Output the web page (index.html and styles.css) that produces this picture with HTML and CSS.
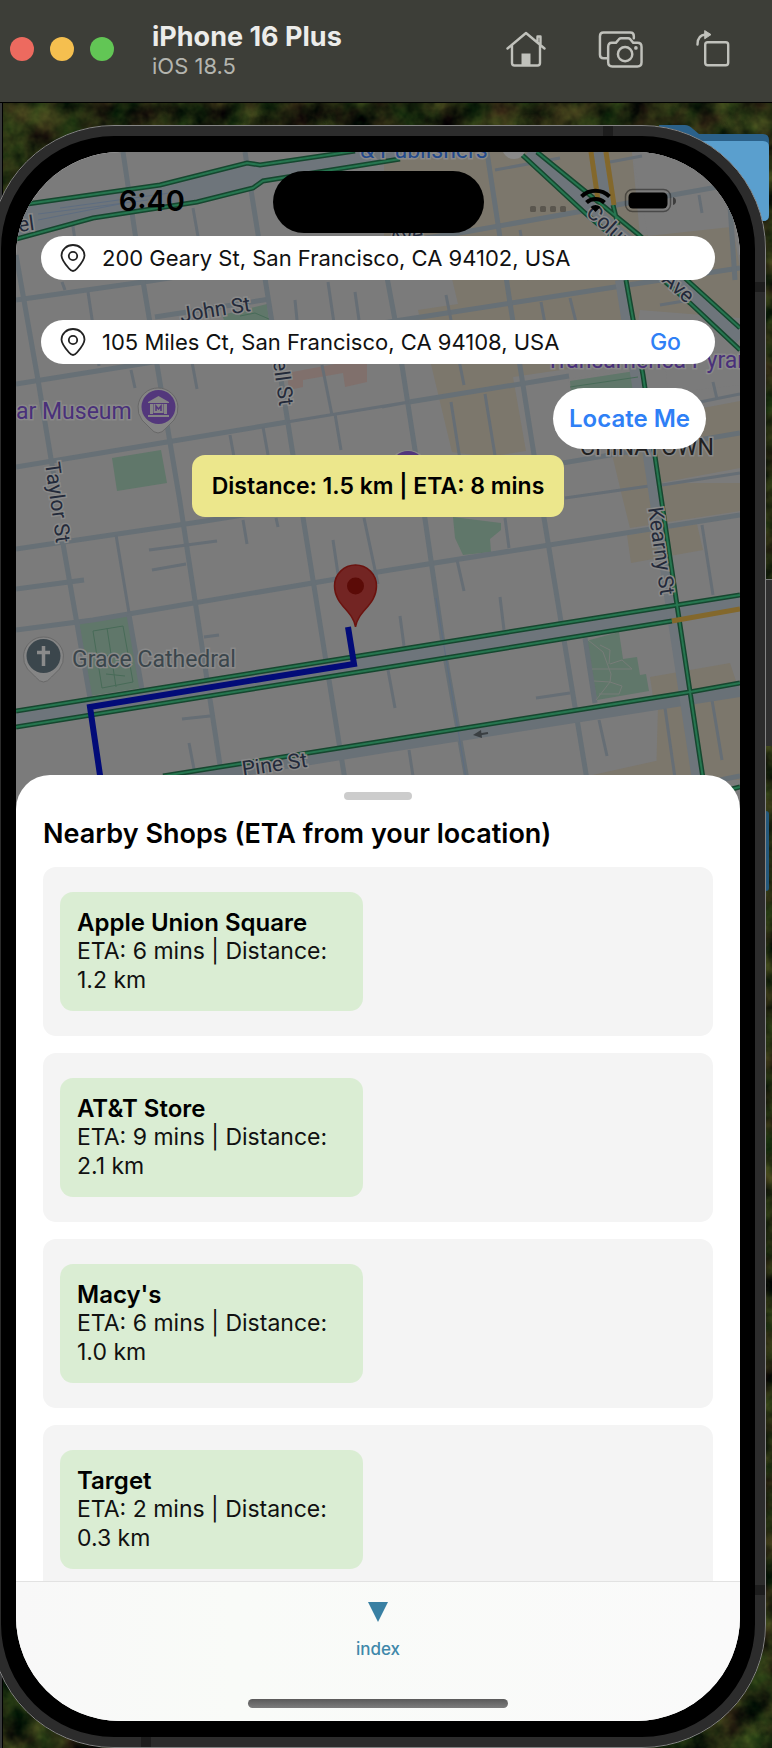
FILE: index.html
```html
<!DOCTYPE html>
<html lang="en">
<head>
<meta charset="utf-8">
<meta name="viewport" content="width=device-width, initial-scale=1">
<title>iPhone 16 Plus</title>
<link rel="stylesheet" href="styles.css">
</head>
<body>
<header class="titlebar">
  <div class="lights">
    <button class="light light-close" aria-label="Close"></button>
    <button class="light light-minimise" aria-label="Minimise"></button>
    <button class="light light-zoom" aria-label="Zoom"></button>
  </div>
  <div class="device">
    <h1 class="device-name">iPhone 16 Plus</h1>
    <p class="device-os">iOS 18.5</p>
  </div>
  <div class="tools">
    <button class="tool" aria-label="Home">
      <svg width="40" height="38" viewBox="0 0 40 38" fill="none" stroke="currentColor" stroke-width="2.4" stroke-linecap="round" stroke-linejoin="round">
        <path d="M1.500 18.500 20 3l18.500 15.500M6 15.500V33q0 2.500 2.500 2.500h23Q34 35.500 34 33V15.500M31.500 12V6.500h3v8.500"/>
        <path d="M15.500 23.500h9V35h-9z" fill="currentColor" stroke="none"/>
      </svg>
    </button>
    <button class="tool" aria-label="Screenshot">
      <svg width="46" height="38" viewBox="0 0 44 37" fill="none" stroke="currentColor" stroke-width="2.400" stroke-linecap="round" stroke-linejoin="round">
        <path d="M8 27.500H5Q1.500 27.500 1.500 24V6q0-3.500 3.500-3.500h26Q34.500 2.500 34.500 6v2"/>
        <path d="M13 12.500h4l3-3.500q1-1 2-1h7q1 0 2 1l3 3.500h4q4 0 4 4V31.500q0 4-4 4H13.500q-4 0-4-4V16.500q0-4 3.500-4z"/>
        <circle cx="26" cy="23.500" r="7"/><circle cx="36.500" cy="17.500" r="1.800" fill="currentColor" stroke="none"/>
      </svg>
    </button>
    <button class="tool" aria-label="Rotate">
      <svg width="34" height="38" viewBox="0 0 34 38" fill="none" stroke="currentColor" stroke-width="2.400" stroke-linecap="round" stroke-linejoin="round">
        <rect x="9.200" y="12.200" width="23" height="23" rx="2.500"/>
        <path d="M1.500 14.500Q1.500 5 9.500 4.500"/><path d="M9 .8 15 4.600 9 8.600z" fill="currentColor" stroke-width="1"/>
      </svg>
    </button>
  </div>
</header>

<main class="desktop">
  <svg class="wallpaper" aria-hidden="true">
    <filter id="foliage" x="0" y="0" width="100%" height="100%" color-interpolation-filters="sRGB">
      <feTurbulence type="fractalNoise" baseFrequency="0.035" numOctaves="4" seed="8"/>
      <feColorMatrix values="0.420 0.200 0 0 -0.170  0.300 0.360 0 0 -0.160  0.150 0.100 0 0 -0.060  0 0 0 0 1"/>
    </filter>
    <rect width="100%" height="100%" filter="url(#foliage)"/>
  </svg>
  <span class="window-edge"></span>
  <svg class="folder" width="112" height="100" viewBox="0 0 112 100" aria-hidden="true">
    <path d="M0 0h26q4 0 8 4l6 5h64q6 0 6 6v75q0 6-6 6H20z" fill="#2b618a"/>
    <path d="M20 16h84q6 0 6 6v68q0 6-6 6H20z" fill="#5a9fce"/>
  </svg>
  <span class="folder-edge"></span>
  <span class="side-button"></span>

  <div class="phone">
    <span class="seam seam-top"></span>
    <span class="seam seam-bottom"></span>
    <span class="seam seam-upper"></span>
    <span class="seam seam-lower"></span>
    <div class="screen">
      <svg class="map" viewBox="16 152 724 660" preserveAspectRatio="xMidYMin slice" role="img" aria-label="Map of San Francisco with route">
        <rect x="16" y="152" width="724" height="660" fill="#7b7b7b"/>
        <g fill="#7c776c">
          <path d="M384 152H632l8 84 92-13 8 45v50l-100-8-8 50-85 12-34 5 13 74-38 6-36-5-34-142 40-6-10-42H384z"/>
          <path d="M703 408l37-7v67l-80 15h80v28l-110 17-8-32-12-50 90-14zM627 535l70-11 6 26-72 13zM650 677l80-14 7 21-84 13zM658 706l82-14v88h-84zM570 780l90-20 5 15z"/>
        </g>
        <path fill="#7b7b7b" d="M632 152h108v74l-92 10zM568 379l60-10 8 34-56 10zM662 330l78-10v65l-72 8z"/>
        <g fill="#60776a">
          <path d="M112 458l49-8 6 33-50 8z"/><path d="M222 315l45-11 2 16h-45zM570 381l65-10 2 18-66 4z"/>
          <path d="M79 622l49-7 12 73-50 8zM453 517l48 6v7l-11 9 1 13-28 3-8-17z"/><path d="M586 641l33-9 4 27 14-2 3 18 6-1 3 17-52 9z"/>
        </g>
        <path fill="#80706c" d="M287 373l80-15v24l-22 5-2-14-40 7v7l-14 3z"/>
        <g fill="none" stroke="#677076" stroke-width="5">
          <path d="M16 300 150 281 465 232 740 183M16 384 147 363 395 321 615 287 740 268M155 317l115-18M16 467l151-25 120-20M409 402l160-26M16 549l183-27 240-38 301-51M16 630l77-10 297-50 350-55M16 589l68-9"/>
          <path d="M16 255l22 125 16 97M62 538l28 160M123 152l12 81 14 84 31 185 40 263M245 152l48 303 52 325M487 152l23 151 34 215 43 262M380 240l15 80 20 130 29 200 23 130M720 780l20-4"/>
          <path d="M129 615l14 80M585 638l10 65"/><path d="M727 160l8 120"/>
        </g>
        <g fill="none" stroke="#666e75" stroke-width="3">
          <path d="M287 422l122-20M565 498l84-12M662 485l78-12M382 407l27-5M700 402l40-8M495 170l65-12M610 162l32-6M660 305l30-5"/>
          <path d="M72 220l3 20M193 208l7 40M62 282l3 8M88 292l11 74M131 370l4 18M192 362l5 27M295 300l3 30M328 282l8 55M355 292l4 28M230 435l4 22M263 427l5 28M335 414l6 36M322 365l10 50M116 535l13 78M149 550l68-9M152 570l34-6M243 520l4 24M276 518l2 9M333 540l5 34M364 518l14 66M204 637l15-2M182 719l28-3M189 743l5 26"/>
          <path d="M451 402l14 90M485 394l13 80M541 302l7 38M520 230l9 50M570 298l6 24M446 295l18 90M505 518l4 30M457 560l7 31M500 597l4 33M400 616l4 30M388 670l7 38M536 698l34-5M599 720l8 36M665 708l10 70M712 700l10 60M702 525l11 70M713 382l4 17M409 750l4 26M699 195l3 18"/>
        </g>
        <!-- wide roads -->
        <path fill="#6e757b" d="M27 204l133-19 87-22 13 2 95-13h60l-25 9-127 20-10 7-56 14-104 16-76 20z"/>
        <path fill="none" stroke="#6e757b" stroke-width="15" d="M528 152l74 68 138 119"/>
        <path fill="none" stroke="#6e757b" stroke-width="14" d="M16 719l374-60 350-57"/>
        <path fill="none" stroke="#697177" stroke-width="12" d="M163 783l227-37 350-55"/>
        <path fill="none" stroke="#6e757b" stroke-width="10" d="M598 152l10 60M620 280l21 130 31 205 25 165"/>
        <path fill="none" stroke="#5e6d80" stroke-width="1" d="M38 214l110-14M38 220l92-18M60 208l110-15M436 598l30 180"/>
        <g fill="none" stroke="#16472f" stroke-width="5">
          <path d="M27 204l133-19 87-22 13 2 95-14M16 239l77-21 104-16 56-14 10-7 137-22M519 152l66 61 105 90 50 47M537 152l102 83 48 45 53 48M613 205l5 20M626 280l17 95 17 115 17 115 27 180M16 711l374-60 287-46 63-10M16 727l374-60 282-46M163 776l227-36 300-48 50-9M728 790l12-3"/>
        </g>
        <g fill="none" stroke="#267650" stroke-width="2">
          <path d="M27 204l133-19 87-22 13 2 95-14M16 239l77-21 104-16 56-14 10-7 137-22M519 152l66 61 105 90 50 47M537 152l102 83 48 45 53 48M613 205l5 20M626 280l17 95 17 115 17 115 27 180M16 711l374-60 287-46 63-10M16 727l374-60 282-46M163 776l227-36 300-48 50-9M728 790l12-3"/>
        </g>
        <path fill="none" stroke="#83682c" stroke-width="5" d="M591 152l7 48M606 152l8 53M672 621l68-12"/>
        <g fill="none" stroke="#486b58" stroke-width="1">
          <path d="M93 631l30-5 10 56-31 6zM107 628l9 59M106 674l19 2M108 655l-8 10M240 316l15-3 14 6M570 387l68-10"/>
        </g>
        <path fill="none" stroke="#777c78" d="M588 640l15 12 8 22-1 8-14 18M592 669h40l-10-9-12 4M594 681l16 1 12 4-3 8h-20M600 645l10 5-1 14"/>
        <path fill="none" stroke="#3a3f42" stroke-width="2" d="M488 733l-12 2"/><path d="M473 735l8-5 1 8z" fill="#3a3f42"/>

        <g class="street">
          <text x="19" y="232" transform="rotate(-8 19 232)">el</text>
          <text x="181" y="322" transform="rotate(-9 181 322)">John St</text>
          <text x="273" y="361" transform="rotate(82 273 361)">ell St</text>
          <text x="45" y="463" transform="rotate(82 45 463)">Taylor St</text>
          <text x="243" y="776" transform="rotate(-8 243 776)">Pine St</text>
          <text x="648" y="508" transform="rotate(82 648 508)">Kearny St</text>
          <text x="585" y="214" transform="rotate(42 585 214)">Columbus</text>
          <text x="661" y="281" transform="rotate(42 661 281)">Ave</text>
          <text x="390" y="245" transform="rotate(-8 390 245)">Ave</text>
        </g>
        <g class="place">
          <text class="place-shop" x="360" y="158">&amp; Publishers</text>
          <text class="place-museum" x="16" y="419">ar Museum</text>
          <text class="place-museum" x="546" y="368">Transamerica Pyramid</text>
          <text class="place-church" x="72" y="667">Grace Cathedral</text>
          <text class="place-area" x="647" y="455">CHINATOWN</text>
        </g>
        <circle cx="514" cy="147" r="12" fill="#898989"/>
        <circle cx="408" cy="470" r="20" fill="#898989"/><circle cx="408" cy="468" r="17" fill="#53377c"/>
        <path d="M158 433q-4 0-8-5l-8-8a20 20 0 1 1 32 0l-8 8q-4 5-8 5z" fill="#858585" stroke="#686868"/>
        <circle cx="158.500" cy="407" r="17" fill="#53377c"/>
        <path d="M148 403v-1l10.500-6 10.500 6v1zM150 404h3v10h-3zM164 404h3v10h-3zM148 415h21v2h-21zM153.500 404h10v9h-10z" fill="#858585"/>
        <path d="M156 411v-5l2.500 3 2.500-3v5" fill="none" stroke="#53377c" stroke-width="1.500"/>
        <path d="M43.500 682q-4 0-8-5l-8-8a20 20 0 1 1 32 0l-8 8q-4 5-8 5z" fill="#858585" stroke="#686868"/>
        <circle cx="43.500" cy="656" r="17" fill="#3b464c"/>
        <path d="M43.500 646v20M37 652.500h13" stroke="#8b8b8b" stroke-width="3.500" fill="none"/>

        <path d="M348 627l6 37-87 14-177 29 11 75" fill="none" stroke="#020b78" stroke-width="6"/>
        <path d="M355.500 627c-2-16-21-22-21-41a21 21 0 0 1 42 0c0 19-19 25-21 41z" fill="#732523" stroke="#6b130f" stroke-width="1.500"/>
        <circle cx="355.500" cy="586" r="8.500" fill="#5b0b07"/>
      </svg>

      <div class="map-view">
        <div class="status">
          <time class="clock">6:40</time>
          <span class="island"></span>
          <span class="indicators">
            <svg width="152" height="28" viewBox="528 186 152 28" aria-label="Wi-Fi connected, battery full" role="img">
              <g fill="#000" fill-opacity=".27"><rect x="530" y="206" width="6" height="6" rx="1.500"/><rect x="540" y="206" width="6" height="6" rx="1.500"/><rect x="550" y="206" width="6" height="6" rx="1.500"/><rect x="560" y="206" width="6" height="6" rx="1.500"/></g>
              <g fill="none" stroke="#000" stroke-width="4"><path d="M581.500 196.500a20 20 0 0 1 28 0M586.500 202.500a13 13 0 0 1 18 0"/></g>
              <path d="M595.500 212l-5-5a7.500 7.500 0 0 1 10 0z"/>
              <rect x="625.500" y="189.500" width="45" height="22" rx="7" fill="none" stroke="#000" stroke-opacity=".4" stroke-width="1.500"/>
              <rect x="628.500" y="192.500" width="39" height="16" rx="4.500"/><path d="M673 197q3 1 3 4t-3 4z" fill-opacity=".5"/>
            </svg>
          </span>
        </div>
        <form class="search" onsubmit="return false">
          <div class="field">
            <label class="field-icon" for="from" aria-label="Start address"><svg width="26" height="28" viewBox="0 0 26 28" fill="none" stroke="#222" stroke-width="1.800"><path d="M13 27q-2 0-4-2.500Q1.500 16 1.500 11.500a11.500 10.500 0 0 1 23 0q0 4.500-7.500 13Q15 27 13 27z"/><circle cx="13" cy="12" r="4.200"/></svg></label>
            <input class="address" id="from" type="text" value="200 Geary St, San Francisco, CA 94102, USA">
          </div>
          <div class="field">
            <label class="field-icon" for="to" aria-label="Destination address"><svg width="26" height="28" viewBox="0 0 26 28" fill="none" stroke="#222" stroke-width="1.800"><path d="M13 27q-2 0-4-2.500Q1.500 16 1.500 11.500a11.500 10.500 0 0 1 23 0q0 4.500-7.500 13Q15 27 13 27z"/><circle cx="13" cy="12" r="4.200"/></svg></label>
            <input class="address" id="to" type="text" value="105 Miles Ct, San Francisco, CA 94108, USA">
            <button class="go" type="submit">Go</button>
          </div>
        </form>
        <button class="locate">Locate Me</button>
        <p class="summary">Distance: 1.5 km | ETA: 8 mins</p>
      </div>

      <section class="sheet">
        <div class="handle"></div>
        <h2 class="sheet-title">Nearby Shops (ETA from your location)</h2>
        <ul class="shops">
          <li class="shop"><div class="shop-info"><h3 class="shop-name">Apple Union Square</h3><p class="shop-meta">ETA: 6 mins | Distance: 1.2 km</p></div></li>
          <li class="shop"><div class="shop-info"><h3 class="shop-name">AT&amp;T Store</h3><p class="shop-meta">ETA: 9 mins | Distance: 2.1 km</p></div></li>
          <li class="shop"><div class="shop-info"><h3 class="shop-name">Macy's</h3><p class="shop-meta">ETA: 6 mins | Distance: 1.0 km</p></div></li>
          <li class="shop"><div class="shop-info"><h3 class="shop-name">Target</h3><p class="shop-meta">ETA: 2 mins | Distance: 0.3 km</p></div></li>
        </ul>
      </section>

      <nav class="tabbar">
        <a class="tab" href="#index">
          <svg width="20" height="20" viewBox="0 0 20 20" aria-hidden="true"><path d="M0 0h20L10 20z" fill="#3980a3"/></svg>
          <span>index</span>
        </a>
        <span class="home-bar"></span>
      </nav>
    </div>
  </div>
</main>
</body>
</html>
```

FILE: styles.css
```css
* { box-sizing: border-box; margin: 0; padding: 0; }

body {
  background: #12160d;
  color: #000;
  font-family: Inter, "Liberation Sans", sans-serif;
  overflow-x: hidden;
}

button, input { font: inherit; border: 0; background: none; }
button { cursor: pointer; }

/* Simulator window bar */
.titlebar {
  display: flex;
  align-items: center;
  height: 103px;
  padding: 0 42px 4px 10px;
  background: #3d3e38;
  border-bottom: 1px solid #000;
}
.lights { display: flex; gap: 16px; }
.light { width: 24px; height: 24px; border-radius: 50%; }
.light-close { background: #ed6a5f; }
.light-minimise { background: #f5bf4f; }
.light-zoom { background: #62c655; }
.device { margin-left: 38px; padding-top: 4px; }
.device-name { font-size: 27px; line-height: 30px; font-weight: 700; color: #ececea; }
.device-os { font-size: 22px; line-height: 28px; color: #b4b5af; }
.tools { display: flex; align-items: center; gap: 52px; margin-left: auto; color: #c0c1bb; }
.tool { display: flex; color: inherit; }

/* Desktop behind the phone */
.desktop {
  position: relative;
  overflow: hidden;
  padding: 22px 6px 0 0;
}
.wallpaper { position: absolute; inset: 0; width: 100%; height: 100%; }
.window-edge { position: absolute; top: 0; bottom: 0; left: 0; width: 3px; background: #38393a; border-right: 1px solid #000; }
.folder { position: absolute; top: 22px; right: 1px; }
.folder-edge { position: absolute; top: 708px; right: 3px; width: 8px; height: 80px; border-radius: 3px; background: #24587c; }
.side-button { position: absolute; top: 476px; right: 0; width: 8px; height: 167px; background: #303030; border-top: 1px solid #777; }

.phone {
  position: relative;
  margin-left: -10px;
  padding: 26px 25px;
  border: 1px solid #858585;
  border-radius: 124px;
  background: #000;
  box-shadow: inset 0 0 0 10px #2c2c2c;
}
.seam { position: absolute; width: 10px; height: 10px; background: #1d1d1d; }
.seam-top { top: 0; right: 152px; }
.seam-bottom { bottom: 0; left: 150px; }
.seam-upper { top: 156px; right: 0; }
.seam-lower { bottom: 152px; right: 0; }
.screen {
  position: relative;
  overflow: hidden;
  border-radius: 104px;
  background: #fff;
}

/* Map */
.map { position: absolute; top: 0; left: 0; width: 100%; height: 660px; }
.map text { font-family: Roboto, "Liberation Sans", sans-serif; font-size: 21px; paint-order: stroke; stroke: #898989; stroke-width: 3px; }
.map .street text { fill: #232a3a; }
.map .place text { font-size: 23px; }
.map .place-shop { fill: #234a8c; }
.map .place-museum { fill: #49307a; }
.map .place-church { fill: #3b464c; }
.map .place-area { fill: #202020; text-anchor: middle; }

.map-view {
  position: relative;
  display: flex;
  flex-direction: column;
  align-items: center;
  min-height: 623px;
}
.status {
  display: grid;
  grid-template-columns: 1fr 211px 1fr;
  align-items: start;
  align-self: stretch;
  height: 84px;
  padding-top: 19px;
}
.clock { justify-self: center; padding: 12px 0 0 15px; font-size: 29px; line-height: 36px; font-weight: 600; }
.island { height: 62px; border-radius: 31px; background: #000; }
.indicators { padding: 15px 0 0 44px; }

.search { align-self: stretch; display: grid; gap: 40px; padding: 0 25px; }
.field {
  display: flex;
  align-items: center;
  height: 44px;
  padding: 0 34px 0 19px;
  border-radius: 22px;
  background: #fff;
}
.field-icon { display: flex; margin-right: 16px; }
.address { flex: 1; min-width: 0; font-size: 22px; outline: 0; color: #111; }
.go { font-size: 23px; font-weight: 500; color: #2f80f6; }
.locate {
  align-self: flex-end;
  height: 61px;
  margin: 24px 34px 6px 0;
  padding: 0 16px;
  border-radius: 31px;
  background: #fff;
  color: #2f80f6;
  font-size: 24px;
  font-weight: 600;
}
.summary {
  padding: 16px 20px;
  border-radius: 13px;
  background: #ece78c;
  font-size: 23px;
  line-height: 30px;
  font-weight: 600;
}

/* Bottom sheet */
.sheet {
  position: relative;
  padding: 17px 27px 0;
  border-radius: 34px 34px 0 0;
  background: #fff;
}
.handle { width: 68px; height: 8px; margin: 0 auto; border-radius: 4px; background: #ccc; }
.sheet-title { padding: 17px 0 16px; font-size: 27px; line-height: 34px; font-weight: 600; }
.shops { display: grid; gap: 17px; list-style: none; }
.shop { padding: 25px 17px; border-radius: 13px; background: #f4f4f4; }
.shop-info { width: 303px; padding: 16px 17px; border-radius: 13px; background: #daedd3; }
.shop-name { font-size: 24px; line-height: 29px; font-weight: 600; }
.shop-meta { font-size: 23px; line-height: 29px; color: #111; }

.tabbar {
  position: relative;
  display: flex;
  flex-direction: column;
  align-items: center;
  gap: 38px;
  margin-top: -13px;
  padding: 20px 0 13px;
  border-top: 1px solid #e2e2e2;
  background: linear-gradient(90deg, #f8f8f8, #f9fbf8 30%, #fafafa);
}
.tab { display: grid; justify-items: center; gap: 15px; color: #3f88aa; font-size: 17px; line-height: 24px; font-weight: 500; text-decoration: none; }
.home-bar { width: 260px; height: 9px; border-radius: 5px; background: linear-gradient(#5a5a5a, #7c7c7c); }
```
